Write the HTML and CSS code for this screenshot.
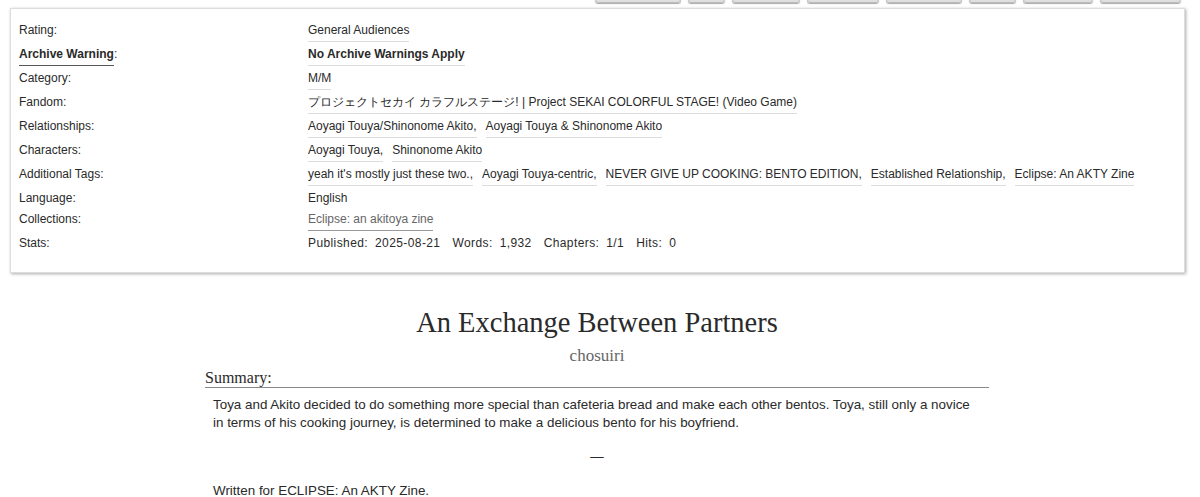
FILE: index.html
```html
<!DOCTYPE html>
<html lang="en">
<head>
<meta charset="utf-8">
<title>An Exchange Between Partners</title>
<link rel="stylesheet" href="styles.css">
</head>
<body>
<ul class="work-nav">
  <li class="btn w86"></li>
  <li class="btn w37"></li>
  <li class="btn w68"></li>
  <li class="btn w72"></li>
  <li class="btn w76"></li>
  <li class="btn w47"></li>
  <li class="btn w70"></li>
  <li class="btn w81"></li>
</ul>
<div class="meta">
  <dl class="meta-list">
    <dt>Rating:</dt>
    <dd><span class="tag">General Audiences</span></dd>
    <dt><span class="warn-label">Archive Warning</span>:</dt>
    <dd><span class="tag bold">No Archive Warnings Apply</span></dd>
    <dt>Category:</dt>
    <dd><span class="tag">M/M</span></dd>
    <dt>Fandom:</dt>
    <dd><span class="tag">プロジェクトセカイ カラフルステージ! | Project SEKAI COLORFUL STAGE! (Video Game)</span></dd>
    <dt>Relationships:</dt>
    <dd><span class="tag">Aoyagi Touya/Shinonome Akito,</span><span class="tag">Aoyagi Touya &amp; Shinonome Akito</span></dd>
    <dt>Characters:</dt>
    <dd><span class="tag">Aoyagi Touya,</span><span class="tag">Shinonome Akito</span></dd>
    <dt>Additional Tags:</dt>
    <dd><span class="tag">yeah it's mostly just these two.,</span><span class="tag">Aoyagi Touya-centric,</span><span class="tag">NEVER GIVE UP COOKING: BENTO EDITION,</span><span class="tag">Established Relationship,</span><span class="tag">Eclipse: An AKTY Zine</span></dd>
    <dt>Language:</dt>
    <dd>English</dd>
    <dt>Collections:</dt>
    <dd><span class="tag coll">Eclipse: an akitoya zine</span></dd>
    <dt>Stats:</dt>
    <dd class="stats"><span>Published:</span><span>2025-08-21</span><span class="sp">Words:</span><span>1,932</span><span class="sp">Chapters:</span><span>1/1</span><span class="sp">Hits:</span><span>0</span></dd>
  </dl>
</div>
<div class="preface">
  <h2 class="title">An Exchange Between Partners</h2>
  <h3 class="byline">chosuiri</h3>
  <div class="summary">
    <h3 class="heading">Summary:</h3>
    <blockquote class="userstuff">
      <p>Toya and Akito decided to do something more special than cafeteria bread and make each other bentos. Toya, still only a novice in terms of his cooking journey, is determined to make a delicious bento for his boyfriend.</p>
      <p class="dash">—</p>
      <p>Written for ECLIPSE: An AKTY Zine.</p>
    </blockquote>
  </div>
</div>
</body>
</html>
```
FILE: styles.css
```css
html, body {
  margin: 0;
  padding: 0;
  background: #fff;
}
body {
  font-family: "Liberation Sans", Arial, sans-serif;
  font-size: 12px;
  color: #2a2a2a;
}
.work-nav {
  list-style: none;
  margin: -17px 0 0 0;
  padding: 0 19px 0 0;
  display: flex;
  justify-content: flex-end;
  gap: 7px;
}
.btn {
  height: 18px;
  border: 1px solid #bbb;
  border-radius: 3px;
  background: linear-gradient(#fff, #ddd);
  box-shadow: 0 1px 1px #aaa;
}
.w86 { width: 84px; }
.w37 { width: 35px; }
.w68 { width: 66px; }
.w72 { width: 70px; }
.w76 { width: 74px; }
.w47 { width: 45px; }
.w70 { width: 68px; }
.w81 { width: 79px; }
.meta {
  margin: 5px 15px 0 10px;
  border: 1px solid #ddd;
  box-shadow: 1px 1px 3px #aaa;
  padding: 11px 8px 18px 8px;
}
.meta-list {
  margin: 0;
  display: grid;
  grid-template-columns: 289px 1fr;
  line-height: 17px;
}
.meta-list dt, .meta-list dd {
  margin: 0;
  padding: 2px 0;
}
.warn-label {
  font-weight: bold;
  border-bottom: 1px solid #555;
  display: inline-block;
  padding-bottom: 2px;
}
.tag {
  display: inline-block;
  border-bottom: 1px solid #ddd;
  padding-bottom: 2px;
  margin-right: 9px;
}
.bold { font-weight: bold; }
.coll { color: #666; border-bottom-color: #999; }
.stats span { margin-right: 7px; letter-spacing: 0.4px; }
.stats .sp { margin-left: 5px; }
.preface {
  margin: 0 211px 0 205px;
}
.title {
  font-family: Georgia, "Liberation Serif", serif;
  font-weight: normal;
  font-size: 28.5px;
  text-align: center;
  margin: 33px 0 0 0;
  line-height: 34px;
}
.byline {
  font-family: Georgia, "Liberation Serif", serif;
  font-weight: normal;
  font-size: 17px;
  color: #666;
  text-align: center;
  margin: 5px 0 0 0;
  line-height: 22px;
}
.heading {
  font-family: Georgia, "Liberation Serif", serif;
  font-weight: normal;
  font-size: 16px;
  margin: 2px 0 0 0;
  line-height: 18px;
  border-bottom: 1px solid #888;
}
.userstuff {
  margin: 0;
  padding: 8px 8px 0 8px;
  font-size: 13.4px;
  line-height: 18px;
}
.userstuff p { margin: 0 0 16px 0; }
.userstuff .dash { text-align: center; margin: 16px 0 16px 0; }
```
